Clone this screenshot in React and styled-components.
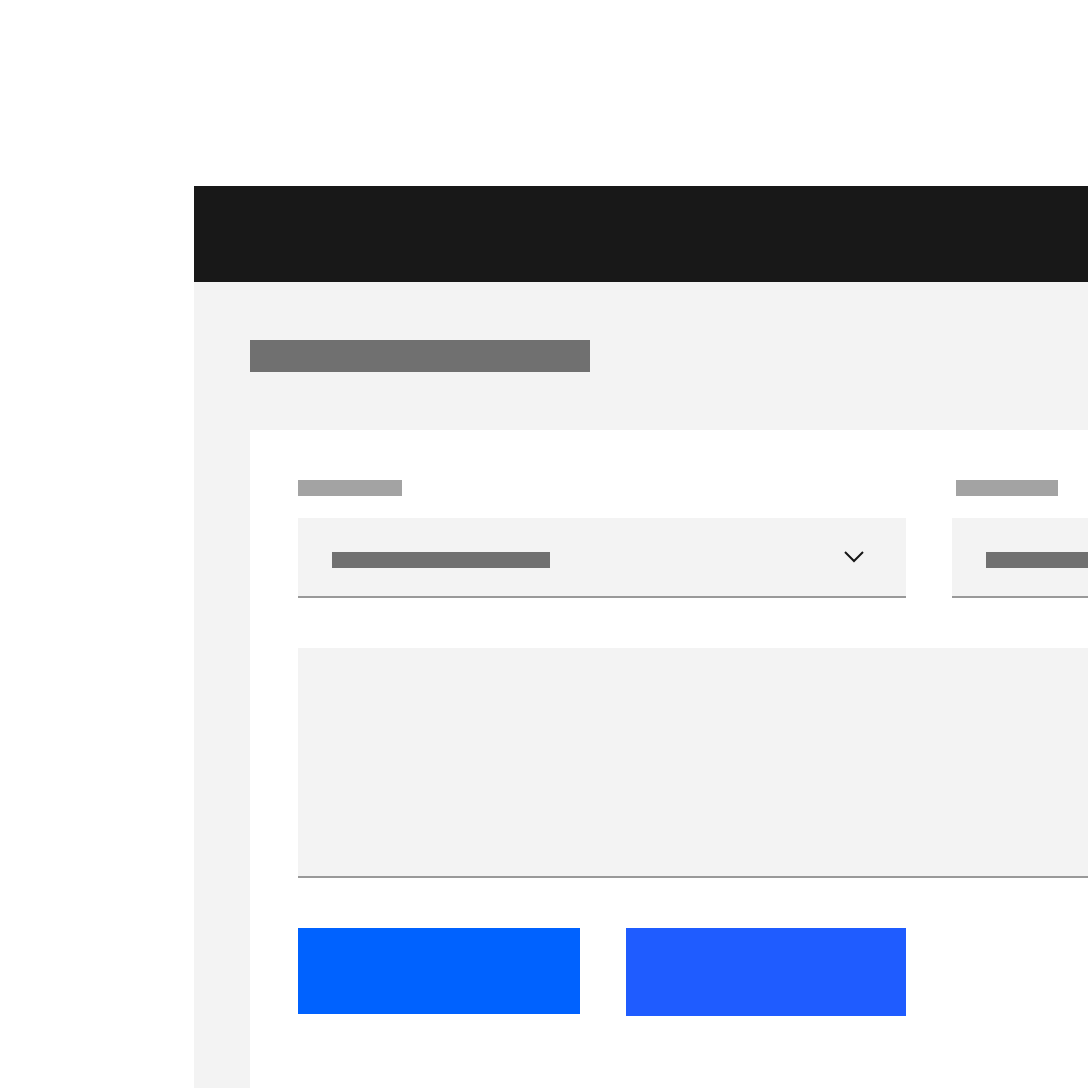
import React from "react";
import styled, { createGlobalStyle } from "styled-components";

const GlobalStyle = createGlobalStyle`
    html, body {
        margin: 0;
        padding: 0;
        background: #ffffff;
        overflow: hidden;
        font-family: "Inter", "Liberation Sans", sans-serif;
    }
`;

const Page = styled.div`
    padding: 186px 0 0 194px;
    width: 1088px;
    height: 1088px;
    box-sizing: border-box;
    overflow: hidden;
`;

const Shell = styled.div`
    display: flex;
    flex-direction: column;
    height: 100%;
    width: 1200px;
`;

const Header = styled.header`
    height: 96px;
    background-color: #181818;
    flex-shrink: 0;
`;

const Main = styled.main`
    flex: 1;
    background-color: #f3f3f3;
    padding: 58px 0 0 56px;
    display: flex;
    flex-direction: column;
`;

const Title = styled.div`
    width: 340px;
    height: 32px;
    background-color: #707070;
    margin-bottom: 58px;
`;

const Card = styled.section`
    flex: 1;
    background-color: #ffffff;
    padding: 50px 48px;
    display: flex;
    flex-direction: column;
`;

const FieldRow = styled.div`
    display: grid;
    grid-template-columns: 608px 608px;
    column-gap: 46px;
    margin-bottom: 50px;
`;

const Field = styled.div`
    display: flex;
    flex-direction: column;
`;

const Label = styled.div`
    width: ${(props) => props.width}px;
    height: 16px;
    margin-left: ${(props) => props.offset || 0}px;
    margin-bottom: 22px;
    background-color: #a3a3a3;
`;

const Select = styled.div`
    position: relative;
    height: 44px;
    background-color: #f3f3f3;
    border-bottom: 2px solid #999999;
    padding: 34px 34px 0;
`;

const Value = styled.div`
    width: 218px;
    height: 16px;
    background-color: #707070;
`;

const Chevron = styled.svg`
    position: absolute;
    right: 42px;
    top: 33px;
`;

const TextArea = styled.div`
    width: 1262px;
    height: 228px;
    background-color: #f3f3f3;
    border-bottom: 2px solid #999999;
    margin-bottom: 50px;
`;

const Actions = styled.div`
    display: flex;
    align-items: flex-start;
    gap: 46px;
`;

const Button = styled.button`
    border: none;
    padding: 0;
    width: ${(props) => props.width}px;
    height: ${(props) => props.height}px;
    background-color: ${(props) => props.colour};
`;

const App = () => {
    return (
        <>
            <GlobalStyle />
            <Page>
                <Shell>
                    <Header />
                    <Main>
                        <Title />
                        <Card>
                            <FieldRow>
                                <Field>
                                    <Label width={104} />
                                    <Select>
                                        <Value />
                                        <Chevron width="20" height="12" viewBox="0 0 20 12">
                                            <polyline
                                                points="1,1 10,10 19,1"
                                                fill="none"
                                                stroke="#161616"
                                                strokeWidth="2"
                                            />
                                        </Chevron>
                                    </Select>
                                </Field>
                                <Field>
                                    <Label width={102} offset={4} />
                                    <Select>
                                        <Value />
                                    </Select>
                                </Field>
                            </FieldRow>
                            <TextArea />
                            <Actions>
                                <Button width={282} height={86} colour="#0062ff" />
                                <Button width={280} height={88} colour="#1f5cff" />
                            </Actions>
                        </Card>
                    </Main>
                </Shell>
            </Page>
        </>
    );
};

export default App;
